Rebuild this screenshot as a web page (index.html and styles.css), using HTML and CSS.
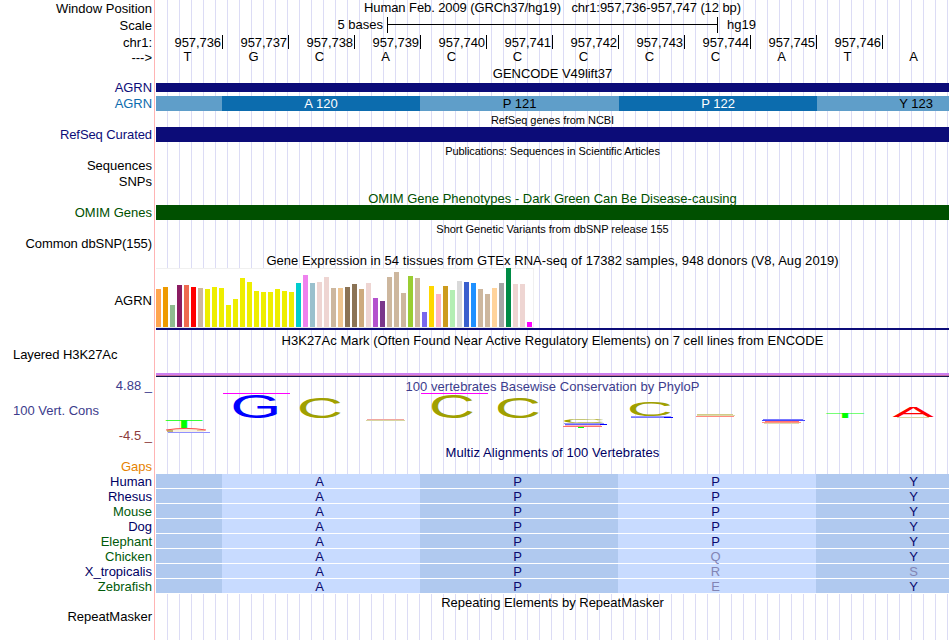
FILE: index.html
```html
<!DOCTYPE html>
<html lang="en">
<head>
<meta charset="utf-8">
<title>Human chr1:957,736-957,747</title>
<link rel="stylesheet" href="styles.css">
</head>
<body>
<main class="browser">
  <div class="row head"><div class="label low">Window Position</div><div class="title t-window">Human Feb. 2009 (GRCh37/hg19)&nbsp;&nbsp; chr1:957,736-957,747 (12 bp)</div></div>
  <div class="row head"><div class="label low">Scale</div><div class="scale"><span class="scale-size">5 bases</span><span class="scale-line"></span><span>hg19</span></div></div>
  <div class="row ruler"><div class="label low">chr1:</div><div class="cells" id="positions"></div></div>
  <div class="row seq"><div class="label">---&gt;</div><div class="cells" id="sequence"></div></div>

  <div class="row gencode-title"><div class="title t-gencode">GENCODE V49lift37</div></div>
  <div class="row thin"><div class="label navy tight">AGRN</div><div class="bar navy-bg"></div></div>
  <div class="row item"><div class="label blue tight">AGRN</div>
    <div class="codons">
      <span class="light"></span><span class="dark">A 120</span><span class="light">P 121</span><span class="dark">P 122</span><span class="light">Y 123</span>
    </div>
  </div>
  <div class="row gap"><div class="title small t-refseq">RefSeq genes from NCBI</div></div>
  <div class="row item"><div class="label navy tight">RefSeq Curated</div><div class="bar navy-bg"></div></div>
  <div class="row gap"><div class="title small t-pubs">Publications: Sequences in Scientific Articles</div></div>
  <div class="row item"><div class="label">Sequences</div></div>
  <div class="row item snps"><div class="label">SNPs</div></div>
  <div class="row gap"><div class="title green t-omim">OMIM Gene Phenotypes - Dark Green Can Be Disease-causing</div></div>
  <div class="row item"><div class="label green">OMIM Genes</div><div class="bar green-bg"></div></div>
  <div class="row gap"><div class="title small t-dbsnp">Short Genetic Variants from dbSNP release 155</div></div>
  <div class="row item"><div class="label tight">Common dbSNP(155)</div></div>
  <div class="row gap expr-title"><div class="title t-gtex">Gene Expression in 54 tissues from GTEx RNA-seq of 17382 samples, 948 donors (V8, Aug 2019)</div></div>
  <div class="row expr"><div class="label">AGRN</div><div class="expr-track"><div class="chart" id="chart"></div><div class="gene-line"></div></div></div>
  <div class="row mark-title"><div class="title t-mark">H3K27Ac Mark (Often Found Near Active Regulatory Elements) on 7 cell lines from ENCODE</div></div>
  <div class="row mark"><div class="label left tight">Layered H3K27Ac</div><div class="signal"></div></div>
  <div class="row cons">
    <div class="cons-labels">
      <div class="label violet">4.88 _</div><div class="label left violet">100 Vert. Cons</div><div class="label brown">-4.5 _</div>
    </div>
    <div class="cons-track">
      <div class="title violet t-phylop">100 vertebrates Basewise Conservation by PhyloP</div>
      <svg class="logo" id="logo" width="793" height="53" viewBox="156 392 793 53"></svg>
    </div>
  </div>
  <div class="row multiz-title"><div class="title deep t-multiz">Multiz Alignments of 100 Vertebrates</div></div>
  <div class="row item"><div class="label orange">Gaps</div></div>
  <div id="alignment"></div>
  <div class="row repeat-title"><div class="title t-repeat">Repeating Elements by RepeatMasker</div></div>
  <div class="row item"><div class="label">RepeatMasker</div></div>
</main>
<script src="app.js"></script>
</body>
</html>
```
FILE: styles.css
```css
* { box-sizing: border-box; }

body {
  margin: 0;
  background: #fff;
  color: #000;
  font: 13px/15px "Liberation Sans", Arial, sans-serif;
}

/* Pink divider after the labels, blue guideline every 12px */
.browser {
  width: 949px;
  height: 640px;
  overflow: hidden;
  background:
    linear-gradient(#ffb4b4, #ffb4b4) 154px 0 / 1px 100% no-repeat,
    repeating-linear-gradient(to right, transparent 0 11px, #dcdcf5 11px 12px) 156px 0 / 793px 100% no-repeat;
}

.row { display: grid; grid-template-columns: 152px 793px; column-gap: 4px; white-space: pre; }
.label { grid-column: 1; text-align: right; }
.label.left { text-align: left; padding-left: 13px; }
.label.low { padding-top: 1px; }
.tight { letter-spacing: -0.08px; }
.title { grid-column: 2; display: flex; justify-content: center; }
.small { font-size: 11px; }

.t-window { letter-spacing: -0.09px; }
.t-gencode, .t-refseq { letter-spacing: -0.04px; }
.t-pubs { letter-spacing: -0.065px; }
.t-dbsnp { letter-spacing: -0.02px; }
.t-gtex { letter-spacing: 0.055px; }
.t-mark { letter-spacing: 0.05px; }
.t-phylop { letter-spacing: 0.04px; }
.t-multiz { letter-spacing: 0.08px; }

.head { height: 17px; }
.ruler { height: 15px; }
.seq { height: 17px; }
.seq .label { padding-top: 1px; }
.gencode-title { height: 17px; }
.thin { height: 9px; margin-bottom: 4px; align-items: center; }
.thin .label { margin: -3px 0; }
.item { height: 15px; }
.gap { height: 16px; }
.gap .title { padding-top: 2px; }
.snps { margin-top: 1px; }
.expr-title { height: 17px; }
.expr { height: 65px; }
.expr .label { padding-top: 25px; }
.mark-title { height: 14px; }
.mark { height: 30px; }
.mark .signal { margin-top: 26px; }
.cons { height: 68px; grid-template-rows: 68px; }
.multiz-title { height: 14px; }
.repeat-title { height: 15px; padding-top: 1px; }

.bar { height: 100%; }
.navy { color: #0c0c78; }
.navy-bg { background: #0c0c78; }
.blue { color: #0c6cae; }
.green { color: #005000; }
.green-bg { background: #005000; }
.violet { color: #3c3c8c; }
.brown { color: #8c3c3c; }
.deep { color: #000064; }
.orange { color: #e68200; }
.forest { color: #005a0a; }

.scale { display: flex; }
.scale-size { width: 231px; padding-right: 4px; text-align: right; }
.scale-line {
  width: 331px; height: 16px; margin-right: 9px;
  border: solid #000; border-width: 0 1px;
  background: linear-gradient(#000, #000) 0 7px / 100% 1px no-repeat;
}

.cells { display: grid; grid-template-columns: repeat(12, 66px); }
.position {
  height: 14px; margin-right: -1px; margin-top: 1px; padding-right: 1px;
  border-right: 1px solid #000;
  text-align: right; line-height: 15px; letter-spacing: -0.08px;
}
.base { padding-right: 3px; text-align: center; }

.codons { display: grid; grid-template-columns: 66px 198px 199px 198px 132px; text-align: center; }
.light { background: #5f9ec9; }
.dark { background: #0c6cae; color: #fff; }
.codons span:last-child { padding-left: 66px; }

.expr-track { display: flex; flex-direction: column; }
.chart {
  display: flex; align-items: flex-end; gap: 2px;
  width: 378px; height: 60px; padding-bottom: 1px;
  background: #fff;
  box-shadow: inset -1px 1px #f0f0f0, inset 0 -1px #e6e6e6;
}
.chart i { width: 5px; }
.gene-line { height: 2px; margin-top: 1px; background: #0c0c78; }
.expr .chart { margin-bottom: -1px; margin-top: 0; }
.expr .gene-line { margin-top: 1px; }

.signal { height: 4px; background: linear-gradient(#cd7ff0 0 2px, #c86ea0 2px 3px, #14144b 3px); }

.cons-labels { display: flex; flex-direction: column; gap: 10px; padding-top: 1px; }
.cons-track { display: flex; flex-direction: column; }
.cons-track .title { height: 15px; padding-top: 2px; }
.logo { display: block; overflow: visible; font: 100px "Liberation Sans", Arial, sans-serif; }

.species { height: 15px; }
.amino {
  display: grid; grid-template: 14px / 66px 198px 198px 198px 133px;
  height: 15px; border-bottom: 1px solid #fff;
  text-align: center; color: #0a0a6e;
}
.amino span { padding-right: 3px; background: #c8dbff; }
.amino span:nth-child(odd) { background: #b0c9ef; }
.amino span:last-child { padding: 0 0 0 62px; }
.amino .diff { color: #8285b4; }
```
FILE: app.js
```js
const add = (parent, tag, cls, text) => {
  const el = document.createElement(tag);
  if (cls) el.className = cls;
  if (text) el.textContent = text;
  parent.appendChild(el);
  return el;
};
const byId = id => document.getElementById(id);

for (let p = 736; p <= 746; p++) add(byId('positions'), 'span', 'position', '957,' + p);
for (const b of 'TGCACCCCCATA') add(byId('sequence'), 'span', 'base', b);

// Tissue expression: [colour, bar height]
const Y = '#eeee00', T = '#cdb79e', R = '#eed5d2';
[['#ffa54f', 38], ['#ee9a00', 40], ['#8fbc8f', 22], ['#8b1c62', 42], ['#ee6a50', 42], ['#ff0000', 40],
 [T, 39], [Y, 38], [Y, 40], [Y, 39], [Y, 22], [Y, 28], [Y, 49], [Y, 45], [Y, 36], [Y, 35], [Y, 35], [Y, 38],
 [Y, 36], [Y, 35], ['#00cdcd', 44], ['#ee82ee', 52], ['#9ac0cd', 44], [R, 45], [R, 50], [T, 39],
 ['#eec591', 39], ['#8b7355', 40], ['#8b7355', 43], ['#cdaa7d', 38], [R, 44], ['#b452cd', 29],
 ['#7a378b', 26], [T, 50], [T, 55], [T, 34], ['#9acd32', 51], [T, 49], ['#7a67ee', 15], ['#ffd700', 41],
 ['#ffb6c1', 33], ['#cd9b1d', 41], ['#b4eeb4', 37], ['#d9d9d9', 46], ['#3a5fcd', 45], ['#1e90ff', 44],
 [T, 38], [T, 33], ['#ffd39b', 39], ['#a6a6a6', 44], ['#008b45', 59], [R, 43], [R, 43], ['#ff00ff', 5]
].forEach(([colour, height]) => {
  const bar = add(byId('chart'), 'i');
  bar.style.background = colour;
  bar.style.height = height + 'px';
});

const NS = 'http://www.w3.org/2000/svg';
const draw = (tag, attrs, text) => {
  const el = document.createElementNS(NS, tag);
  for (const k in attrs) el.setAttribute(k, attrs[k]);
  if (text) el.textContent = text;
  byId('logo').appendChild(el);
};

// Sequence logo: [letter, left, top, width, height] of each stretched letter
const ink = { T: [2, 57, 69, 0], G: [5, 66, 70, 1], C: [5, 64, 70, 1], A: [0, 66, 69, 0] };
const fill = { T: '#00ff00', G: '#0000ff', C: '#a0a000', A: '#ff0000' };
[['T', 165.5, 420, 37, 8], ['G', 233.5, 395, 43.5, 23], ['C', 300, 397, 41, 21],
 ['C', 432, 395, 41, 23], ['C', 498, 397, 41, 21], ['C', 564, 419, 40, 4],
 ['C', 630, 402, 41, 14], ['T', 826, 413, 38, 5], ['A', 892.5, 407, 41, 10]
].forEach(([ch, x, y, w, h]) => {
  const [left, width, up, down] = ink[ch];
  const sx = w / width, sy = h / (up + down);
  draw('text', { transform: `translate(${x - left * sx} ${y + up * sy}) scale(${sx} ${sy})`, fill: fill[ch] }, ch);
});

// Low-scoring letters, flattened to lines: [x, y, width, height, colour]
[[168, 429, 36, 3, '#f7f0e0'], [167, 430, 6, 2, '#c0b070'], [197, 430, 8, 1, '#e8c8a0'], [168, 432, 42, 1, '#9090ff'],
 [367, 419, 37, 1, '#f0a8a0'], [366, 420, 39, 1, '#d8d4a0'],
 [564, 423, 40, 1, '#9898f0'], [565, 424, 42, 1, '#6060ff'], [600, 424, 7, 1, '#0000ff'],
 [565, 425, 36, 1, '#ffb8b8'], [563, 426, 39, 1, '#ff7070'], [578, 427, 6, 1, '#00ff00'],
 [631, 416, 40, 1, '#9898ff'], [631, 417, 42, 1, '#7878ff'], [664, 417, 9, 1, '#0000ff'],
 [697, 414, 36, 1, '#d0cc88'], [697, 415, 38, 1, '#dcd8a8'], [696, 416, 38, 1, '#ff8c80'],
 [763, 419, 40, 1, '#7878ff'], [762, 420, 43, 1, '#4848ff'], [765, 421, 34, 1, '#ff7070'],
 [762, 422, 39, 1, '#ff9080'], [764, 423, 35, 1, '#ddd8b0'],
 [897, 417, 32, 1, '#d8d4a0']
].forEach(([x, y, width, height, colour]) => draw('rect', { x, y, width, height, fill: colour }));
draw('path', { d: 'M166 430 Q186 426.8 206 430', fill: 'none', stroke: '#ff4848', 'stroke-width': 1 });

// Values clipped at the top of the scale
for (const x of [223, 421]) draw('rect', { x, y: 393, width: 67, height: 1, fill: '#ff00ff' });

[['Human', 'APPY'], ['Rhesus', 'APPY'], ['Mouse', 'APPY'], ['Dog', 'APPY'], ['Elephant', 'APPY'],
 ['Chicken', 'APQY'], ['X_tropicalis', 'APRS'], ['Zebrafish', 'APEY']
].forEach(([name, acids]) => {
  const row = add(byId('alignment'), 'div', 'row species');
  const green = ['Mouse', 'Elephant', 'Chicken', 'Zebrafish'].includes(name);
  add(row, 'div', 'label ' + (green ? 'forest' : 'deep'), name);
  const cells = add(row, 'div', 'amino');
  add(cells, 'span');
  [...acids].forEach((a, i) => add(cells, 'span', a === 'APPY'[i] ? '' : 'diff', a));
});
```
